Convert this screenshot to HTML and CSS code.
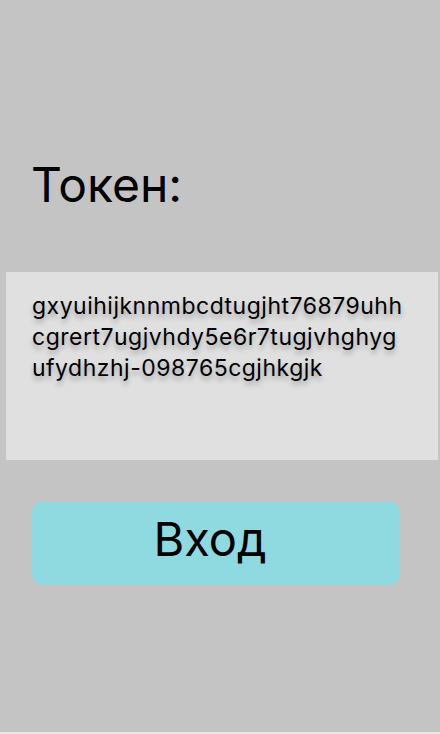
FILE: index.html
```html
<!DOCTYPE html>
<html lang="ru">
<head>
<meta charset="utf-8">
<title>Токен</title>
<link rel="stylesheet" href="styles.css">
</head>
<body>
<main class="screen">
  <h1 class="title">Токен:</h1>
  <div class="token-box">
    <p class="token-text">gxyuihijknnmbcdtugjht76879uhh<br>cgrert7ugjvhdy5e6r7tugjvhghyg<br>ufydhzhj-098765cgjhkgjk</p>
  </div>
  <button class="login-btn" type="button">Вход</button>
</main>
</body>
</html>
```

FILE: styles.css
```css
html {
  background: #e8e8e8;
}
body {
  margin: 0;
  font-family: Inter, "Noto Sans", sans-serif;
  color: #000;
}
.screen {
  height: 732px;
  background: #c4c4c4;
  display: flex;
  flex-direction: column;
  align-items: flex-start;
  padding-top: 161px;
  box-sizing: border-box;
}
.title {
  margin: 0 0 0 31px;
  font-size: 48px;
  line-height: 48px;
  font-weight: 400;
}
.token-box {
  margin: 63px 0 0 6px;
  width: 432px;
  height: 188px;
  box-sizing: border-box;
  background: #e0e0e0;
  padding: 19px 20px 0 26px;
}
.token-text {
  margin: 0;
  font-size: 23px;
  line-height: 31px;
  letter-spacing: 0.5px;
  white-space: nowrap;
  text-shadow: 0 4px 5px rgba(0, 0, 0, 0.28);
}
.login-btn {
  margin: 42px 0 0 32px;
  width: 368px;
  height: 83px;
  border: none;
  border-radius: 10px;
  background: #8fd9e0;
  font-family: Inter, "Noto Sans", sans-serif;
  font-size: 47px;
  line-height: 73px;
  padding: 0 12px 10px 0;
  color: #000;
}
```
